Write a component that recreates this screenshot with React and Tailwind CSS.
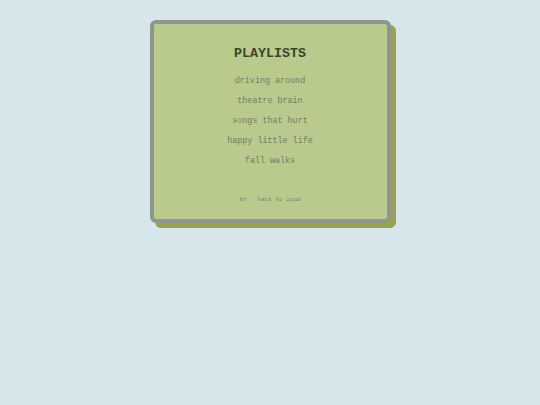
const playlists = ['driving around', 'theatre brain', 'songs that hurt', 'happy little life', 'fall walks'];

export default function App() {
  return (
    <div className="min-h-screen w-full bg-[#d7e6ea] pt-[20px]" style={{ fontFamily: '"Courier New", Courier, "Liberation Mono", monospace' }}>
      <div className="mx-auto w-[241px] h-[203px] rounded-[6px] border-4 border-[#8f9590] bg-[#b8cb8c] shadow-[5px_5px_0_#99a34a] flex flex-col items-center pt-[22px]">
        <h1 className="text-[13.3px] leading-[16px] font-bold text-[#3a4529]">PLAYLISTS</h1>
        <ul className="mt-[9px] flex flex-col items-center">
          {playlists.map(p => (
            <li key={p} className="text-[8.4px] leading-[20px] text-[#727e62]">{p}</li>
          ))}
        </ul>
        <p className="mt-[24px] text-[6px] leading-[10px] text-[#7a876a] whitespace-pre">{'â†   back to ipod'}</p>
      </div>
    </div>
  );
}
